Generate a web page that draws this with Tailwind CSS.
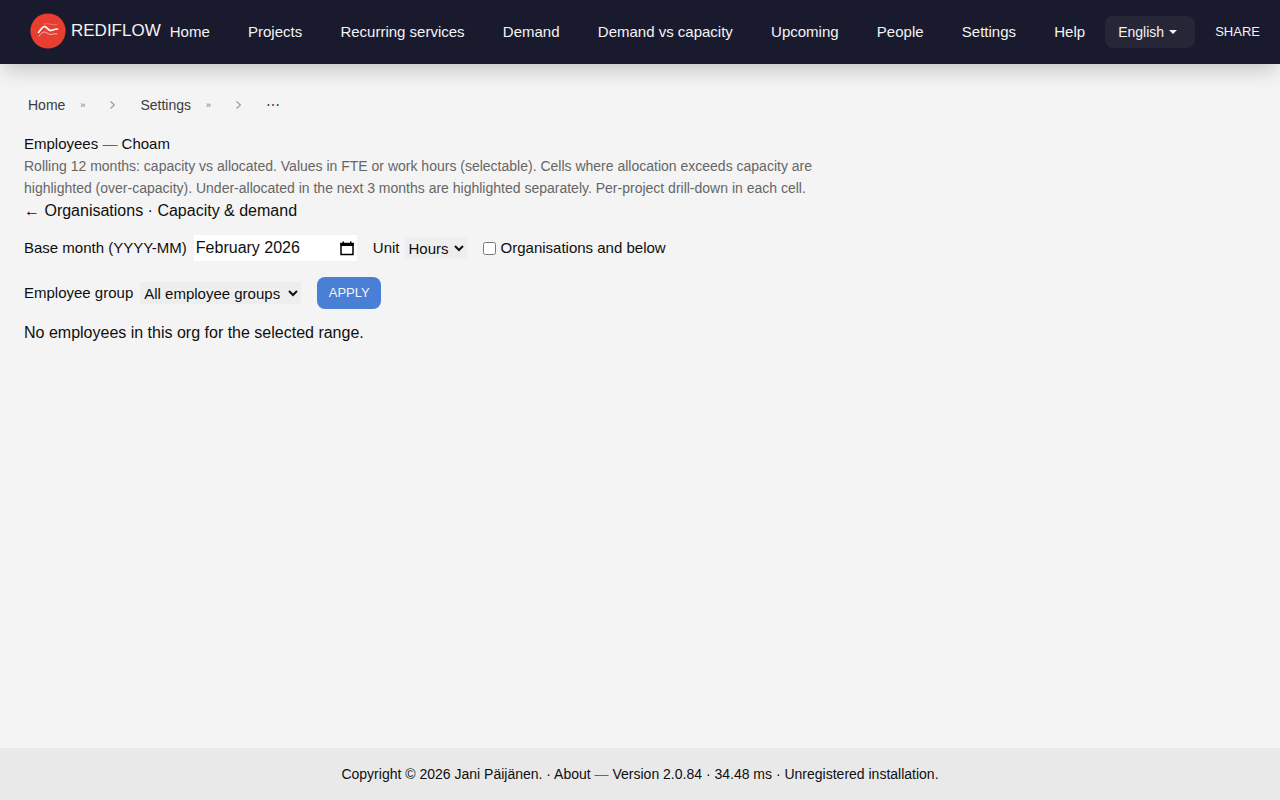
<!DOCTYPE html>
<html lang="en">
<head>
<meta charset="utf-8">
<meta name="viewport" content="width=device-width, initial-scale=1">
<title>Employees — Choam</title>
<script src="https://cdn.jsdelivr.net/npm/@tailwindcss/browser@4"></script>
</head>
<body class="flex min-h-screen flex-col bg-[#f4f4f4] font-['Liberation_Sans',sans-serif] text-base text-[#0f0f0f]">
<header class="flex h-16 items-center bg-[#1a1a2e] pr-5 pl-[30px] text-[#f4f4f4] shadow-[0_10px_20px_-4px_rgba(0,0,0,0.2)]">
  <a href="#" class="mr-[9px] flex items-center gap-[5px] pb-0.5 text-[17px] leading-6">
    <svg class="size-9" viewBox="0 0 36 36" fill="none" stroke-linecap="round" stroke-linejoin="round" aria-hidden="true">
      <circle cx="18" cy="18" r="17.6" fill="#e83e30"/>
      <path d="M14 11c5-1.500 8 2 13 .5" stroke="#f0786d" stroke-width="1"/>
      <path d="M8.500 19.500c2-2 3.500-6 6-6s3.500 4.500 6.500 4c2-.5 4-1.500 6.500-1.500" stroke="#fff" stroke-width="1.700"/>
      <path d="M9 23c2-2 3.500-4.500 6-4s3.500 3 6 2.500 3.500-1 6-.5" stroke="#f9b9b2" stroke-width="1"/>
    </svg>
    <span>REDIFLOW</span>
  </a>
  <nav class="flex flex-1 items-center justify-between text-[15px] whitespace-nowrap" aria-label="Main">
    <a href="#">Home</a>
    <a href="#">Projects</a>
    <a href="#">Recurring services</a>
    <a href="#">Demand</a>
    <a href="#">Demand vs capacity</a>
    <a href="#">Upcoming</a>
    <a href="#">People</a>
    <a href="#">Settings</a>
    <a href="#">Help</a>
  </nav>
  <div class="relative ml-5 flex items-center">
    <select aria-label="Language" class="h-8 w-[90px] appearance-none rounded-lg bg-[#262637] px-[13px] text-sm"><option>English</option></select>
    <svg class="pointer-events-none absolute right-[18px] h-1 w-2" viewBox="0 0 8 4" fill="#f4f4f4" aria-hidden="true"><path d="M0 0h8L4 4z"/></svg>
  </div>
  <button type="button" class="ml-5 text-[13px]">SHARE</button>
</header>
<main class="flex flex-1 flex-col items-start px-6 pt-[31px]">
  <nav class="flex h-5 items-center pl-1 text-sm text-[#3c3c3c]" aria-label="Breadcrumb">
    <a href="#">Home</a>
    <span class="ml-[15px] text-[9px] text-[#777]">»</span>
    <svg class="mx-[25px] h-2 w-[5px]" viewBox="0 0 5 8" fill="none" stroke="#999" stroke-width="1.200" aria-hidden="true"><path d="M.5.5 4.500 4 .5 7.500"/></svg>
    <a href="#">Settings</a>
    <span class="ml-[15px] text-[9px] text-[#777]">»</span>
    <svg class="mx-[25px] h-2 w-[5px]" viewBox="0 0 5 8" fill="none" stroke="#999" stroke-width="1.200" aria-hidden="true"><path d="M.5.5 4.500 4 .5 7.500"/></svg>
    <button type="button" aria-label="More">⋯</button>
  </nav>
  <h1 class="mt-[18px] text-[15px] leading-[22px]">Employees <span class="text-[#666]">—</span> Choam</h1>
  <p class="max-w-[800px] text-sm leading-[22px] text-[#666]">Rolling 12 months: capacity vs allocated. Values in FTE or work hours (selectable). Cells where allocation exceeds capacity are highlighted (over-capacity). Under-allocated in the next 3 months are highlighted separately. Per-project drill-down in each cell.</p>
  <p class="leading-6"><a href="#">← Organisations</a> · <a href="#">Capacity &amp; demand</a></p>
  <form class="mt-3 flex max-w-[720px] flex-wrap items-center gap-4 text-[15px]">
    <div class="flex items-center gap-[7px]"><label for="month">Base month (YYYY-MM)</label>
      <div class="relative flex items-center">
        <input id="month" type="text" value="February 2026" class="h-[26px] w-[163px] bg-white px-0.5 text-base">
        <svg class="pointer-events-none absolute right-[3px] h-[15px] w-[14px]" viewBox="0 0 14 15" aria-hidden="true"><path d="M1 2.500h12v11H1z" fill="none" stroke="#000" stroke-width="1.500"/><path d="M.5 2h13v3H.5zM2.500.5H4V3H2.500zM10 .5h1.500V3H10z"/></svg>
      </div>
    </div>
    <div class="flex items-center gap-[5px]"><label for="unit">Unit</label><select id="unit" class="h-[22px] w-[62px] bg-[#eee]"><option>Hours</option></select></div>
    <div class="flex items-center gap-[5px]"><input id="below" type="checkbox" class="size-[13px]"><label for="below">Organisations and below</label></div>
    <div class="flex basis-full items-center gap-4">
      <div class="flex items-center gap-[7px]"><label for="group">Employee group</label><select id="group" class="h-[22px] w-[161px] bg-[#eee]"><option>All employee groups</option></select></div>
      <button type="button" class="h-8 w-16 rounded-lg bg-[#4a7fd6] text-[13px] text-[#f4f4f4]">APPLY</button>
    </div>
  </form>
  <p class="mt-3 leading-6">No employees in this org for the selected range.</p>
</main>
<footer class="flex h-[52px] items-center justify-center bg-[#e9e9e9] text-sm">
  <p>Copyright © 2026 Jani Päijänen. · <a href="#">About</a> <span class="text-[#666]">—</span> Version 2.0.84 · 34.48 ms · Unregistered installation.</p>
</footer>
</body>
</html>
